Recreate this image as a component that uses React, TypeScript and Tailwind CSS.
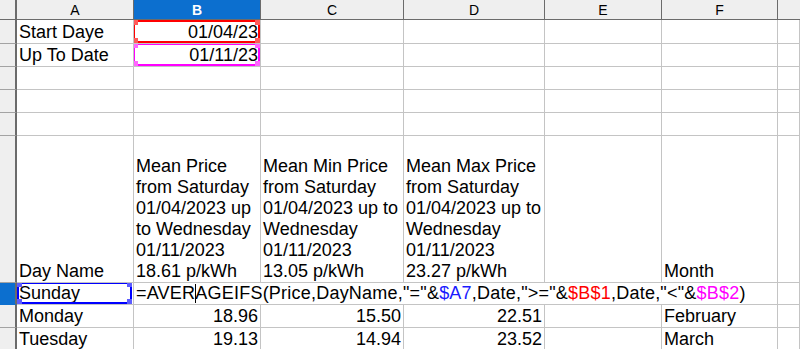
import { ReactNode } from 'react';

type Align = 'left' | 'right';

interface CellProps {
    children?: ReactNode;
    align?: Align;
    className?: string;
}

// plain spreadsheet cell, text sits on the bottom edge like Calc does
function Cell({ children, align = 'left', className = '' }: CellProps) {
    return (
        <div
            className={`relative flex items-end overflow-hidden whitespace-nowrap border-r border-b border-[#c4c4c4] px-[2px] text-[18px] leading-[21px] ${align === 'right' ? 'justify-end' : 'justify-start'
                } ${className}`}
        >
            {children}
        </div>
    );
}

function RowHead({ active = false }: { active?: boolean }) {
    return (
        <div
            className={`border-r-2 border-b border-r-[#6b6b6b] ${active ? 'bg-[#0c6fcf] border-b-[#0c6fcf]' : 'bg-[#efefef] border-b-[#a3a3a3]'}`}
        />
    );
}

function ColHead({ label, active = false }: { label: string; active?: boolean }) {
    return (
        <div
            className={`flex items-center justify-center border-r border-b border-[#6b6b6b] text-[14px] leading-none ${active ? 'bg-[#0c6fcf] font-bold text-white' : 'bg-[#efefef] text-black'
                }`}
        >
            {label}
        </div>
    );
}

// reference highlight box with the little drag squares on its corners
function RefBox({ color, handle, className }: { color: string; handle: string; className: string }) {
    const sq = `absolute h-[5px] w-[5px] ${handle}`;
    return (
        <div className={`pointer-events-none absolute border-2 ${color} ${className}`}>
            <div className={`${sq} -left-[2px] -top-[2px]`} />
            <div className={`${sq} -right-[2px] -top-[2px]`} />
            <div className={`${sq} -left-[2px] -bottom-[2px]`} />
            <div className={`${sq} -right-[2px] -bottom-[2px]`} />
        </div>
    );
}

function Lines({ lines }: { lines: string[] }) {
    return (
        <div className="flex flex-col">
            {lines.map((l, i) => (
                <span key={i}>{l}</span>
            ))}
        </div>
    );
}

const meanPrice = ['Mean Price', 'from Saturday', '01/04/2023 up', 'to Wednesday', '01/11/2023', '18.61 p/kWh'];
const meanMin = ['Mean Min Price', 'from Saturday', '01/04/2023 up to', 'Wednesday', '01/11/2023', '13.05 p/kWh'];
const meanMax = ['Mean Max Price', 'from Saturday', '01/04/2023 up to', 'Wednesday', '01/11/2023', '23.27 p/kWh'];

const dataRows = [
    { day: 'Monday', mean: '18.96', min: '15.50', max: '22.51', month: 'February' },
    { day: 'Tuesday', mean: '19.13', min: '14.94', max: '23.52', month: 'March' },
];

export default function App() {
    return (
        <div className="h-[349px] w-[800px] overflow-hidden bg-white font-['Liberation_Sans',Arial,sans-serif] text-black">
            <div className="grid grid-cols-[17px_117px_127px_143px_141px_117px_116px_1fr] grid-rows-[20px_24px_23px_23px_23px_23px_147px_22px_23px_23px]">
                {/* Column headers */}
                <div className="border-r-2 border-b border-[#6b6b6b] bg-[#efefef]" />
                <ColHead label="A" />
                <ColHead label="B" active />
                <ColHead label="C" />
                <ColHead label="D" />
                <ColHead label="E" />
                <ColHead label="F" />
                <div className="border-b border-[#6b6b6b] bg-[#efefef]" />

                {/* Row 1 */}
                <RowHead />
                <Cell>Start Daye</Cell>
                <Cell align="right">
                    01/04/23
                    <RefBox color="border-[#ff0000]" handle="bg-[#ff5a5a]" className="-left-[1px] top-0 right-0 bottom-0" />
                </Cell>
                <Cell />
                <Cell />
                <Cell />
                <Cell />
                <Cell />

                {/* Row 2 */}
                <RowHead />
                <Cell>Up To Date</Cell>
                <Cell align="right">
                    01/11/23
                    <RefBox color="border-[#ff00ff]" handle="bg-[#ff66ff]" className="-left-[1px] -top-[1px] right-0 bottom-0" />
                </Cell>
                <Cell />
                <Cell />
                <Cell />
                <Cell />
                <Cell />

                {/* Rows 3-5 empty */}
                {[3, 4, 5].map((r) => (
                    <div key={r} className="contents">
                        <RowHead />
                        <Cell />
                        <Cell />
                        <Cell />
                        <Cell />
                        <Cell />
                        <Cell />
                        <Cell />
                    </div>
                ))}

                {/* Row 6 headings */}
                <RowHead />
                <Cell>Day Name</Cell>
                <Cell>
                    <Lines lines={meanPrice} />
                </Cell>
                <Cell>
                    <Lines lines={meanMin} />
                </Cell>
                <Cell>
                    <Lines lines={meanMax} />
                </Cell>
                <Cell />
                <Cell>Month</Cell>
                <Cell />

                {/* Row 7 - formula being edited */}
                <RowHead active />
                <Cell>
                    Sunday
                    <RefBox color="border-[#0000ff]" handle="bg-[#5c5cff]" className="left-0 -top-[1px] right-[1px] bottom-0" />
                </Cell>
                <Cell className="col-span-5 bg-white tracking-[0.22px]">
                    <span>
                        =AVER
                        <span className="-mr-px inline-block h-[19px] w-px bg-black align-[-4px]" />
                        AGEIFS(Price,DayName,"="&amp;<span className="text-[#1a1aff]">$A7</span>,Date,"&gt;="&amp;
                        <span className="text-[#ff0000]">$B$1</span>,Date,"&lt;"&amp;
                        <span className="text-[#ff00ff]">$B$2</span>)
                    </span>
                </Cell>
                <Cell />

                {/* Rows 8-9 */}
                {dataRows.map((row) => (
                    <div key={row.day} className="contents">
                        <RowHead />
                        <Cell>{row.day}</Cell>
                        <Cell align="right">{row.mean}</Cell>
                        <Cell align="right">{row.min}</Cell>
                        <Cell align="right">{row.max}</Cell>
                        <Cell />
                        <Cell>{row.month}</Cell>
                        <Cell />
                    </div>
                ))}
            </div>
        </div>
    );
}
